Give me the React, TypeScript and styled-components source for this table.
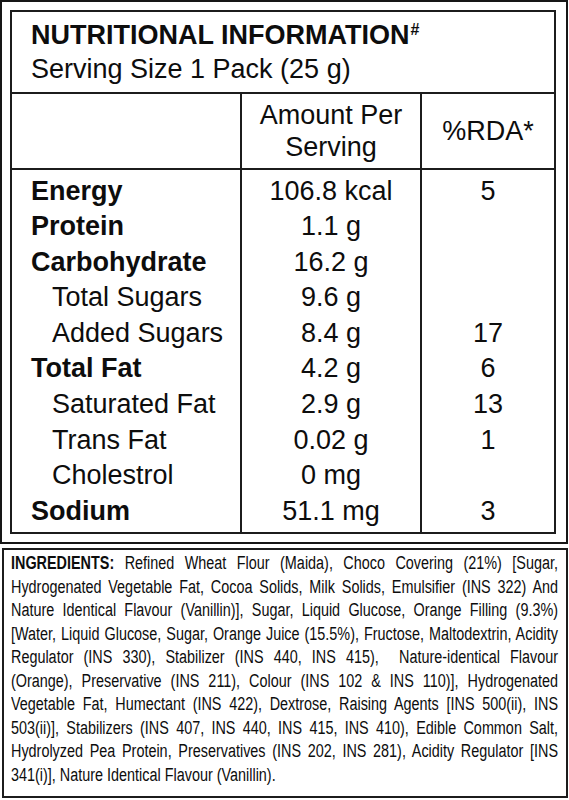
import styled, { createGlobalStyle } from 'styled-components';

type Nutrient = {
  name: string;
  amount: string;
  rda?: string;
  sub?: boolean;
};

const nutrients: Nutrient[] = [
  { name: 'Energy', amount: '106.8 kcal', rda: '5' },
  { name: 'Protein', amount: '1.1 g' },
  { name: 'Carbohydrate', amount: '16.2 g' },
  { name: 'Total Sugars', amount: '9.6 g', sub: true },
  { name: 'Added Sugars', amount: '8.4 g', rda: '17', sub: true },
  { name: 'Total Fat', amount: '4.2 g', rda: '6' },
  { name: 'Saturated Fat', amount: '2.9 g', rda: '13', sub: true },
  { name: 'Trans Fat', amount: '0.02 g', rda: '1', sub: true },
  { name: 'Cholestrol', amount: '0 mg', sub: true },
  { name: 'Sodium', amount: '51.1 mg', rda: '3' },
];

const ingredientLines = [
  'Refined Wheat Flour (Maida), Choco Covering (21%) [Sugar,',
  'Hydrogenated Vegetable Fat, Cocoa Solids, Milk Solids, Emulsifier (INS 322) And',
  'Nature Identical Flavour (Vanillin)], Sugar, Liquid Glucose, Orange Filling (9.3%)',
  '[Water, Liquid Glucose, Sugar, Orange Juice (15.5%), Fructose, Maltodextrin, Acidity',
  'Regulator (INS 330), Stabilizer (INS 440, INS 415),  Nature-identical Flavour',
  '(Orange), Preservative (INS 211), Colour (INS 102 & INS 110)], Hydrogenated',
  'Vegetable Fat, Humectant (INS 422), Dextrose, Raising Agents [INS 500(ii), INS',
  '503(ii)], Stabilizers (INS 407, INS 440, INS 415, INS 410), Edible Common Salt,',
  'Hydrolyzed Pea Protein, Preservatives (INS 202, INS 281), Acidity Regulator [INS',
  '341(i)], Nature Identical Flavour (Vanillin).',
];

// the label print uses a condensed face; squeeze the regular one to match
const SQUEEZE = 0.8;

const App = () => {
  return (
    <>
      <GlobalStyle />
      <Page>
        <Frame>
          <Panel>
            <Heading>
              <Title>
                NUTRITIONAL INFORMATION<Sup>#</Sup>
              </Title>
              <Serving>Serving Size 1 Pack (25 g)</Serving>
            </Heading>
            <HeadRow>
              <Cell />
              <HeadCell $divided>
                Amount Per
                <br />
                Serving
              </HeadCell>
              <HeadCell $divided>%RDA*</HeadCell>
            </HeadRow>
            {nutrients.map((item, index) => (
              <Row
                key={item.name}
                $first={index === 0}
                $last={index === nutrients.length - 1}
              >
                <Name $sub={item.sub}>{item.name}</Name>
                <Value $divided>{item.amount}</Value>
                <Value $divided>{item.rda}</Value>
              </Row>
            ))}
          </Panel>
        </Frame>
        <Ingredients>
          <Condensed $scale={SQUEEZE}>
            {ingredientLines.map((line, index) => (
              <Line key={index} $last={index === ingredientLines.length - 1}>
                {index === 0 && <Label>INGREDIENTS: </Label>}
                {line}
              </Line>
            ))}
          </Condensed>
        </Ingredients>
      </Page>
    </>
  );
};

export default App;

const GlobalStyle = createGlobalStyle`
  body {
    margin: 0;
    background: #fff;
    color: #0d0d0d;
    font-family: 'Liberation Sans', Arial, sans-serif;
  }
`;

const Page = styled.div`
  width: 569px;
  height: 800px;
  background: #fff;
  overflow: hidden;
`;

const Frame = styled.div`
  width: 568px;
  height: 544px;
  box-sizing: border-box;
  border: 2px solid #161616;
  padding: 8px 10px 8px 8px;
`;

const Panel = styled.div`
  border: 2px solid #1c1c1c;
`;

const Heading = styled.div`
  padding: 6px 0 6px 19px;
  border-bottom: 2px solid #1c1c1c;
`;

const Title = styled.div`
  font-size: 27px;
  line-height: 34px;
  font-weight: 700;
`;

const Sup = styled.span`
  font-size: 16px;
  margin-left: 1px;
  vertical-align: 9px;
  line-height: 0;
`;

const Serving = styled.div`
  font-size: 27px;
  line-height: 34px;
`;

const Grid = styled.div`
  display: grid;
  grid-template-columns: 228px 180px 1fr;
`;

const HeadRow = styled(Grid)`
  height: 74px;
  border-bottom: 2px solid #1c1c1c;
`;

const Row = styled(Grid)<{ $first?: boolean; $last?: boolean }>`
  height: ${(p) => 35.6 + (p.$first ? 3.5 : 0) + (p.$last ? 2.5 : 0)}px;

  & > * {
    padding-top: ${(p) => (p.$first ? 3.5 : 0)}px;
  }
`;

const Cell = styled.div<{ $divided?: boolean }>`
  box-sizing: border-box;
  font-size: 27px;
  line-height: 35.6px;
  border-left: ${(p) => (p.$divided ? '2px solid #1c1c1c' : 'none')};
  white-space: nowrap;
`;

const HeadCell = styled(Cell)`
  display: flex;
  align-items: center;
  justify-content: center;
  text-align: center;
  line-height: 32px;
`;

const Name = styled(Cell)<{ $sub?: boolean }>`
  padding-left: ${(p) => (p.$sub ? 40 : 19)}px;
  font-weight: ${(p) => (p.$sub ? 400 : 700)};
`;

const Value = styled(Cell)`
  text-align: center;
`;

const Ingredients = styled.div`
  margin: 4px 1px 0 2px;
  height: 250px;
  box-sizing: border-box;
  border: 2px solid #1c1c1c;
  padding: 2px 8px 0 7px;
  overflow: hidden;
`;

const Condensed = styled.div<{ $scale: number }>`
  width: ${(p) => 100 / p.$scale}%;
  transform: scaleX(${(p) => p.$scale});
  transform-origin: 0 0;
  font-size: 18px;
  line-height: 23.5px;
`;

const Line = styled.div<{ $last?: boolean }>`
  white-space: pre;
  text-align: ${(p) => (p.$last ? 'left' : 'justify')};
  text-align-last: ${(p) => (p.$last ? 'left' : 'justify')};
`;

const Label = styled.span`
  font-weight: 700;
`;
